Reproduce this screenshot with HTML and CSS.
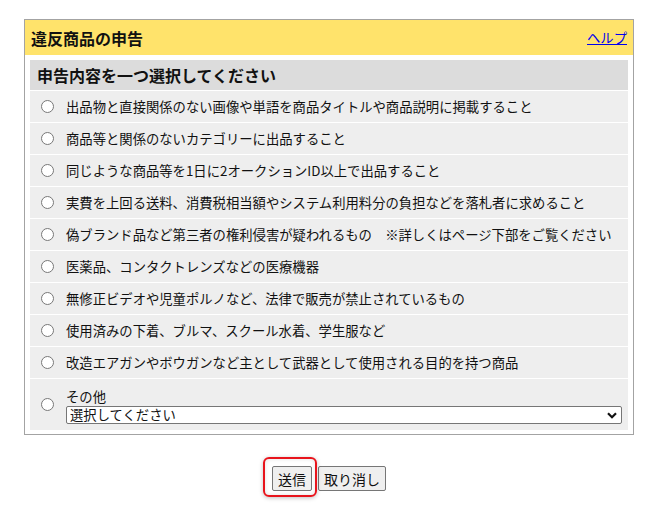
FILE: index.html
```html
<!DOCTYPE html>
<html lang="ja">
<head>
<meta charset="utf-8">
<title>違反商品の申告</title>
<link rel="stylesheet" href="styles.css">
</head>
<body>
<div class="panel">
  <div class="panel-head">
    <h1 class="panel-title">違反商品の申告</h1>
    <a class="help" href="#">ヘルプ</a>
  </div>
  <div class="panel-body">
    <div class="subhead">申告内容を一つ選択してください</div>
    <label class="option"><input class="radio" type="radio" name="reason"><span class="opt-text">出品物と直接関係のない画像や単語を商品タイトルや商品説明に掲載すること</span></label>
    <label class="option"><input class="radio" type="radio" name="reason"><span class="opt-text">商品等と関係のないカテゴリーに出品すること</span></label>
    <label class="option"><input class="radio" type="radio" name="reason"><span class="opt-text">同じような商品等を1日に2オークションID以上で出品すること</span></label>
    <label class="option"><input class="radio" type="radio" name="reason"><span class="opt-text">実費を上回る送料、消費税相当額やシステム利用料分の負担などを落札者に求めること</span></label>
    <label class="option"><input class="radio" type="radio" name="reason"><span class="opt-text">偽ブランド品など第三者の権利侵害が疑われるもの　※詳しくはページ下部をご覧ください</span></label>
    <label class="option"><input class="radio" type="radio" name="reason"><span class="opt-text">医薬品、コンタクトレンズなどの医療機器</span></label>
    <label class="option"><input class="radio" type="radio" name="reason"><span class="opt-text">無修正ビデオや児童ポルノなど、法律で販売が禁止されているもの</span></label>
    <label class="option"><input class="radio" type="radio" name="reason"><span class="opt-text">使用済みの下着、ブルマ、スクール水着、学生服など</span></label>
    <label class="option"><input class="radio" type="radio" name="reason"><span class="opt-text">改造エアガンやボウガンなど主として武器として使用される目的を持つ商品</span></label>
    <div class="option option-other">
      <input class="radio" type="radio" name="reason">
      <div class="other-body">
        <span class="opt-text">その他</span>
        <div class="select-wrap">
          <select class="other-select">
            <option>選択してください</option>
          </select>
          <svg class="chev" width="10" height="7" viewBox="0 0 10 7" aria-hidden="true"><path d="M1 1.2 L5 5.2 L9 1.2" fill="none" stroke="#111" stroke-width="2.2"/></svg>
        </div>
      </div>
    </div>
  </div>
</div>
<div class="actions">
  <span class="focus-ring"><button class="btn" type="button">送信</button></span>
  <button class="btn" type="button">取り消し</button>
</div>
</body>
</html>
```

FILE: styles.css
```css
html, body {
  margin: 0;
  padding: 0;
  background: #ffffff;
}
body {
  font-family: "Noto Sans CJK JP", "Noto Sans", sans-serif;
  color: #111111;
  font-size: 13.33px;
  min-height: 510px;
}
.panel {
  margin: 19px 0 0 24px;
  width: 608px;
  border: 1px solid #a3a3a3;
}
.panel-head {
  height: 35px;
  background: #ffe36b;
  display: flex;
  align-items: center;
  justify-content: space-between;
  padding: 0 6px 0 6px;
}
.panel-title {
  margin: 0;
  font-size: 16px;
  font-weight: bold;
  line-height: 20px;
}
.help {
  color: #0000ee;
  font-size: 13.33px;
  text-decoration: underline;
  line-height: 18px;
}
.panel-body {
  padding: 5px 5px 4px;
  display: flex;
  flex-direction: column;
  gap: 1px;
}
.subhead {
  height: 30px;
  background: #dcdcdc;
  font-size: 16px;
  font-weight: bold;
  display: flex;
  align-items: center;
  padding-left: 7px;
}
.option {
  height: 31px;
  background: #eeeeee;
  display: flex;
  align-items: center;
  padding-left: 11px;
}
.radio {
  margin: 0;
  width: 13px;
  height: 13px;
  flex: none;
}
.opt-text {
  margin-left: 12px;
  line-height: 18px;
}
.option-other {
  height: 51px;
}
.other-body {
  display: flex;
  flex-direction: column;
  margin-left: 12px;
  padding-top: 2px;
}
.other-body .opt-text {
  margin-left: 0;
}
.select-wrap {
  position: relative;
  display: flex;
}
.other-select {
  -webkit-appearance: none;
  appearance: none;
  box-sizing: border-box;
  width: 556px;
  height: 18px;
  font-family: inherit;
  font-size: 13.33px;
  line-height: 16px;
  padding: 0 20px 0 3px;
  margin: 0;
  border: 1px solid #767676;
  border-radius: 2px;
  background: #ffffff;
  color: #111111;
}
.chev {
  position: absolute;
  right: 5px;
  top: 6px;
  pointer-events: none;
}
.actions {
  margin: 31px 0 0 24px;
  width: 610px;
  display: flex;
  justify-content: center;
  align-items: flex-start;
  gap: 6px;
  padding-bottom: 12px;
}
.focus-ring {
  position: relative;
  display: flex;
}
.focus-ring::before {
  content: "";
  position: absolute;
  left: -9px;
  top: -9px;
  right: -5px;
  bottom: -6px;
  border: 2px solid #e8141c;
  border-radius: 6px;
  box-shadow: 0 1px 4px rgba(0, 0, 0, 0.25), inset 0 0 4px rgba(0, 0, 0, 0.12);
  pointer-events: none;
}
.btn {
  height: 25px;
  padding: 0 5px;
  font-family: inherit;
  font-size: 14px;
  color: #111111;
  background: #efefef;
  border: 1px solid #767676;
  border-radius: 2px;
  line-height: 20px;
}
```
